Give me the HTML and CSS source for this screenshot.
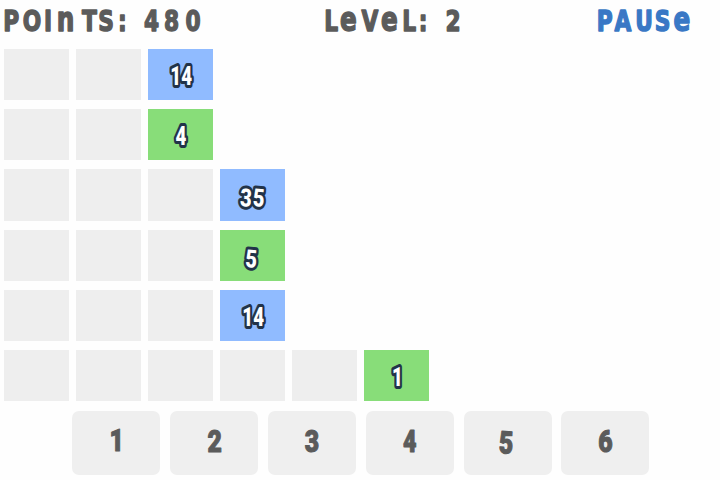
FILE: index.html
```html
<!DOCTYPE html>
<html lang="en">
<head>
<meta charset="utf-8">
<title>Number game</title>
<link rel="stylesheet" href="styles.css">
</head>
<body>
<header class="status">
  <svg class="points" width="240" height="45"><g transform="scale(.75 1)"><text y="31" x="15 42.7 64 87.3 119.3 141.3 163.3 180 202 228.7 257.3">POI<tspan class="tall">n</tspan>TS: 480</text></g></svg>
  <svg class="level" width="200" height="45"><g transform="scale(.75 1)"><text y="30.6" x="41.7 64.7 93.3 119.3 145.7 164 184 204">L<tspan class="tall">e</tspan>V<tspan class="tall">e</tspan>L: 2</text></g></svg>
  <svg class="pause" width="140" height="45"><g transform="scale(.75 1)"><text y="30.6" x="33 57.3 85.3 110 136">PAUS<tspan class="tall">e</tspan></text></g></svg>
</header>
<main class="board">
  <div class="row"><i></i><i></i><div class="tile blue"><svg viewBox="0 0 65 51"><g transform="scale(.75 1)"><text y="36.5" x="37 51.5">14</text></g></svg></div></div>
  <div class="row"><i></i><i></i><div class="tile green"><svg viewBox="0 0 65 51"><g transform="scale(.75 1)"><text y="36" x="44">4</text></g></svg></div></div>
  <div class="row"><i></i><i></i><i></i><div class="tile blue"><svg viewBox="0 0 65 51"><g transform="scale(.8 1)"><text y="37" x="32 48" rotate="4">35</text></g></svg></div></div>
  <div class="row"><i></i><i></i><i></i><div class="tile green"><svg viewBox="0 0 65 51"><g transform="scale(.8 1)"><text y="37" x="38.5" rotate="4">5</text></g></svg></div></div>
  <div class="row"><i></i><i></i><i></i><div class="tile blue"><svg viewBox="0 0 65 51"><g transform="scale(.75 1)"><text y="36.5" x="37 51.5">14</text></g></svg></div></div>
  <div class="row"><i></i><i></i><i></i><i></i><i></i><div class="tile green"><svg viewBox="0 0 65 51"><g transform="scale(.75 1)"><text y="36.5" x="44.5">1</text></g></svg></div></div>
</main>
<nav class="keys">
  <button><svg viewBox="0 0 88 64"><g transform="scale(.8 1)"><text y="40.5" x="56">1</text></g></svg></button>
  <button><svg viewBox="0 0 88 64"><g transform="scale(.8 1)"><text y="41.5" x="56">2</text></g></svg></button>
  <button><svg viewBox="0 0 88 64"><g transform="scale(.8 1)"><text y="41.5" x="55">3</text></g></svg></button>
  <button><svg viewBox="0 0 88 64"><g transform="scale(.75 1)"><text y="41.5" x="58.5">4</text></g></svg></button>
  <button><svg viewBox="0 0 88 64"><g transform="scale(.8 1)"><text y="42" x="52" rotate="3">5</text></g></svg></button>
  <button><svg viewBox="0 0 88 64"><g transform="scale(.8 1)"><text y="41" x="55.5">6</text></g></svg></button>
</nav>
</body>
</html>
```
FILE: styles.css
```css
* { box-sizing: border-box; }
body {
  margin: 0;
  width: 720px;
  height: 480px;
  overflow: hidden;
  background: #fefefe;
  font-family: Roboto, "Liberation Sans", sans-serif;
}
svg { display: block; overflow: visible; }
text {
  font-family: Roboto, "Liberation Sans", sans-serif;
  font-size: 31px;
  font-weight: 900;
  text-anchor: middle;
  fill: #5b5b5b;
  stroke: #5b5b5b;
  stroke-width: 1.1px;
  stroke-linejoin: round;
}
.status { display: flex; height: 49px; }
.status text {
  font-family: "DejaVu Sans", sans-serif;
  font-weight: 700;
  font-size: 29px;
  stroke-width: 1.5px;
}
.status .tall { font-size: 33px; }
.level { margin-left: 60px; }
.pause { margin-left: 80px; }
.pause text { fill: #3978c5; stroke: #3978c5; }
.board { display: grid; gap: 8.9px; padding-left: 3.5px; }
.row { display: flex; gap: 7.1px; height: 51.3px; }
.row > * { width: 65px; height: 51.3px; background: #eee; }
.row > .blue { background: #90bbff; }
.row > .green { background: #88dd79; }
.tile text {
  font-size: 25px;
  fill: #fff;
  stroke: #223349;
  stroke-width: 6px;
  paint-order: stroke;
}
.keys { display: flex; gap: 9.8px; padding: 9.4px 0 0 72.4px; }
.keys button {
  width: 88px;
  height: 64.3px;
  padding: 0;
  border: 0;
  border-radius: 7px;
  background: #efefef;
}
```
